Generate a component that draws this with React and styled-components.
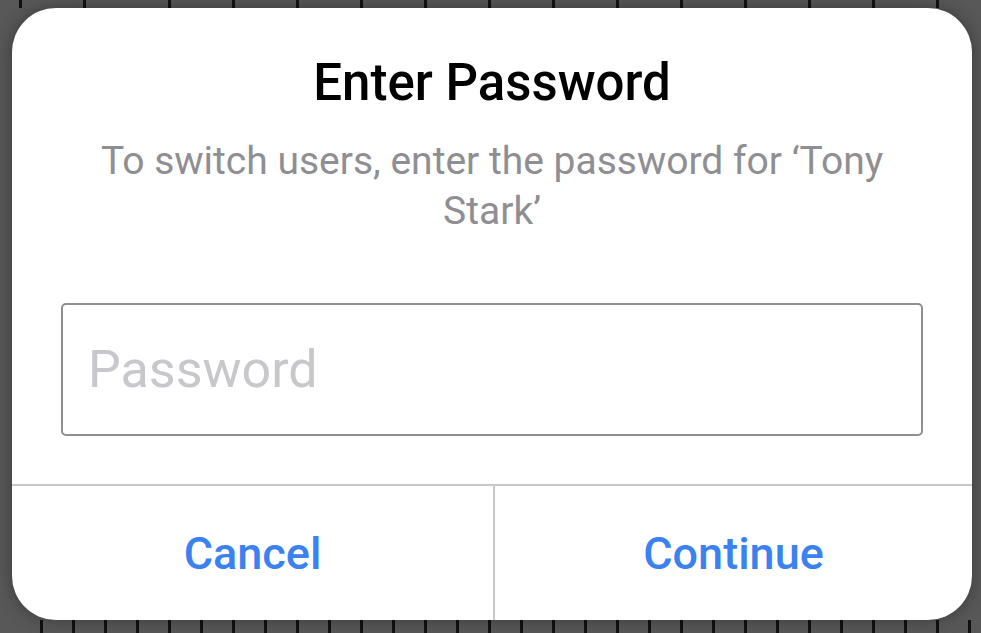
import React from 'react'
import styled, { createGlobalStyle } from 'styled-components'

const GlobalStyle = createGlobalStyle`
  html, body {
    margin: 0;
    padding: 0;
    background: #585858;
    font-family: Roboto, "Liberation Sans", sans-serif;
  }
`

export default () => (
  <Screen>
    <GlobalStyle />
    <Backdrop>
      <Ruler $step={64} $offset={104} $height={8} />
      <Sheet>
        <EdgeColumn $side="left">
          <EdgeGlyph>S</EdgeGlyph>
          <EdgeGlyph>D</EdgeGlyph>
          <EdgeGlyph>O</EdgeGlyph>
        </EdgeColumn>
        <EdgeColumn $side="right">
          <EdgeGlyph>0</EdgeGlyph>
          <EdgeGlyph>0</EdgeGlyph>
          <EdgeGlyph>0</EdgeGlyph>
        </EdgeColumn>
      </Sheet>
      <Ruler $step={32} $offset={8} $height={13} />
    </Backdrop>

    <Dialog>
      <Title>Enter Password</Title>
      <Message>To switch users, enter the password for ‘Tony Stark’</Message>
      <Field>
        <Input type="password" placeholder="Password" />
      </Field>
      <Actions>
        <Action>Cancel</Action>
        <Action $divided>Continue</Action>
      </Actions>
    </Dialog>
  </Screen>
)

const Screen = styled.div`
  position: relative;
  width: 981px;
  height: 633px;
  overflow: hidden;
  background: #585858;
`
const Backdrop = styled.div`
  display: flex;
  flex-direction: column;
  height: 100%;
`
const Ruler = styled.div`
  height: ${p => p.$height}px;
  flex-shrink: 0;
  background: repeating-linear-gradient(
    90deg,
    transparent 0,
    transparent ${p => p.$step - 3}px,
    #111 ${p => p.$step - 3}px,
    #111 ${p => p.$step}px
  );
  background-position: ${p => p.$offset + 3}px 0;
`
const Sheet = styled.div`
  flex: 1;
  display: flex;
  justify-content: space-between;
`
const EdgeColumn = styled.div`
  display: flex;
  flex-direction: column;
  justify-content: space-between;
  padding: 50px 0 8px;
  margin: ${p => (p.$side === 'left' ? '0 0 0 -33px' : '0 -26px 0 0')};
`
const EdgeGlyph = styled.span`
  font-size: 50px;
  line-height: 60px;
  color: #000;
`
const Dialog = styled.div`
  position: absolute;
  left: 12px;
  top: 8px;
  width: 960px;
  height: 612px;
  box-sizing: border-box;
  display: flex;
  flex-direction: column;
  align-items: center;
  padding-top: 45px;
  background: #fff;
  border-radius: 44px;
  box-shadow: 0 0 18px rgba(0, 0, 0, 0.35);
  overflow: hidden;
`
const Title = styled.h1`
  margin: 0;
  font-size: 51px;
  line-height: 60px;
  font-weight: 500;
  color: #000;
`
const Message = styled.p`
  margin: 23px 0 0;
  padding: 0 50px;
  font-size: 39px;
  line-height: 50px;
  color: #8e8e93;
  text-align: center;
`
const Field = styled.div`
  align-self: stretch;
  margin: 67px 49px 0;
`
const Input = styled.input`
  display: block;
  box-sizing: border-box;
  width: 100%;
  height: 133px;
  padding: 0 25px;
  border: 2px solid #8e8e93;
  border-radius: 5px;
  outline: none;
  font-family: Roboto, "Liberation Sans", sans-serif;
  font-size: 52px;
  color: #000;

  &::placeholder {
    color: #c7c7cc;
  }
`
const Actions = styled.div`
  align-self: stretch;
  margin-top: auto;
  height: 134px;
  display: grid;
  grid-template-columns: 481px 1fr;
  border-top: 2px solid #c8c7cc;
`
const Action = styled.button`
  border: none;
  border-left: ${p => (p.$divided ? '2px solid #c8c7cc' : 'none')};
  background: none;
  padding: 0;
  font-family: Roboto, "Liberation Sans", sans-serif;
  font-size: 45px;
  font-weight: 500;
  color: #3b82f0;
  cursor: pointer;
`
